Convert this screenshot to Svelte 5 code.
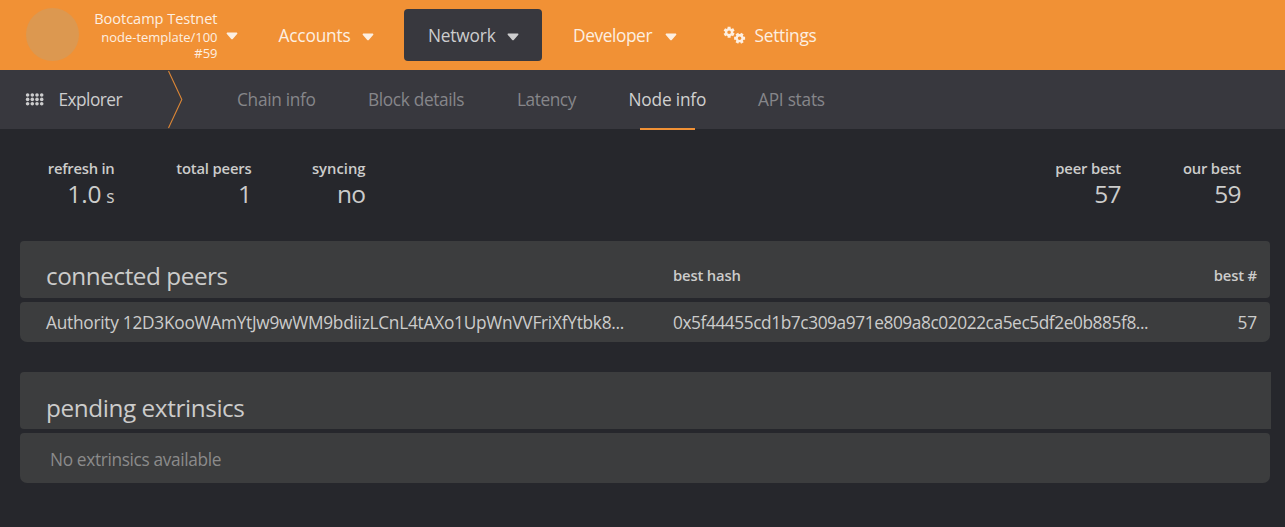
<script>
  const menus = [
    { name: 'Accounts', cls: 'accounts' },
    { name: 'Network', cls: 'network active' },
    { name: 'Developer', cls: 'developer' }
  ];
  const tabs = [
    { name: 'Chain info', cls: 'chain' },
    { name: 'Block details', cls: 'block' },
    { name: 'Latency', cls: 'latency' },
    { name: 'Node info', cls: 'node active' },
    { name: 'API stats', cls: 'api' }
  ];
  const left = [
    { label: 'refresh in', value: '1.0', unit: ' s', cls: 'refresh' },
    { label: 'total peers', value: '1', cls: 'peers' },
    { label: 'syncing', value: 'no', cls: 'syncing' }
  ];
  const right = [
    { label: 'peer best', value: '57', cls: 'peerbest' },
    { label: 'our best', value: '59', cls: 'ourbest' }
  ];
  const dots = [0, 1, 2].flatMap((r) => [0, 1, 2, 3].map((c) => ({ x: 2.6 + c * 4.7, y: 2 + r * 4.4 })));

  // outline of a six-toothed gear around (cx, cy)
  function gear(cx, cy, turn) {
    const pts = [];
    for (let i = 0; i < 6; i++) {
      const a = turn + (i * Math.PI) / 3;
      for (const [d, r] of [[-0.36, 4.2], [-0.27, 5.7], [0.27, 5.7], [0.36, 4.2]]) {
        pts.push(`${(cx + r * Math.cos(a + d)).toFixed(2)} ${(cy + r * Math.sin(a + d)).toFixed(2)}`);
      }
    }
    return `M${pts.join('L')}ZM${cx - 1.8} ${cy}a1.8 1.8 0 1 0 3.6 0a1.8 1.8 0 1 0 -3.6 0Z`;
  }
</script>

{#snippet caret()}
  <svg class="caret" width="12" height="8" viewBox="0 0 12 8"><path d="M1.2 0.5H10.8Q12 1 11.1 2L7 6.7Q6 7.7 5 6.7L0.9 2Q0 1 1.2 0.5Z" /></svg>
{/snippet}

{#snippet stat(s)}
  <div class="stat {s.cls}">
    <h5>{s.label}</h5>
    <div class="value">{s.value}{#if s.unit}<small>{s.unit}</small>{/if}</div>
  </div>
{/snippet}

<div class="page">
  <header>
    <div class="chaininfo">
      <div class="logo"></div>
      <div class="names">
        <div class="title">Bootcamp Testnet</div>
        <div>node-template/100</div>
        <div>#59</div>
      </div>
      {@render caret()}
    </div>
    <nav>
      {#each menus as m}
        <div class="menu {m.cls}"><span>{m.name}</span>{@render caret()}</div>
      {/each}
      <div class="menu settings">
        <svg width="24" height="20" viewBox="0 0 24 20"><path fill-rule="evenodd" d={gear(6.1, 6.2, 0.52)} /><path fill-rule="evenodd" d={gear(16.6, 12.2, 0)} /></svg>
        <span>Settings</span>
      </div>
    </nav>
  </header>

  <div class="tabs">
    <div class="section">
      <svg class="grid" width="19" height="13" viewBox="0 0 19 13">
        {#each dots as d}<circle cx={d.x} cy={d.y} r="1.8" />{/each}
      </svg>
      <span>Explorer</span>
    </div>
    <svg class="chevron" width="17" height="59" viewBox="0 0 17 59"><path d="M1.5 1L14.8 29.5L1.5 58" /></svg>
    {#each tabs as t}
      <div class="tab {t.cls}"><span>{t.name}</span></div>
    {/each}
  </div>

  <main>
    <section class="summary">
      <div class="group">{#each left as s}{@render stat(s)}{/each}</div>
      <div class="group">{#each right as s}{@render stat(s)}{/each}</div>
    </section>

    <section class="table">
      <div class="head">
        <h1>connected peers</h1>
        <h5>best hash</h5>
        <h5 class="end">best #</h5>
      </div>
      <div class="row">
        <div class="peer">Authority 12D3KooWAmYtJw9wWM9bdiizLCnL4tAXo1UpWnVVFriXfYtbk8...</div>
        <div class="hash">0x5f44455cd1b7c309a971e809a8c02022ca5ec5df2e0b885f8...</div>
        <div class="end">57</div>
      </div>
    </section>

    <section class="table pending">
      <div class="head"><h1>pending extrinsics</h1></div>
      <div class="row empty">No extrinsics available</div>
    </section>
  </main>
</div>

<style>
  :global(body) { margin: 0; background: #26272c; }
  .page {
    box-sizing: border-box;
    width: 100%;
    height: 527px;
    overflow: hidden;
    background: #26272c;
    color: #cccccb;
    font: 17.3px/24px "Open Sans", "Noto Sans", sans-serif;
    letter-spacing: -0.18px;
    white-space: nowrap;
  }
  h1, h5 { margin: 0; }
  svg { display: block; flex: none; fill: currentColor; }

  header { display: flex; height: 70px; background: #f19135; color: #fdefe1; }
  .chaininfo { display: flex; width: 254.5px; box-sizing: border-box; padding-left: 26px; }
  .logo { width: 53px; height: 53px; margin-top: 8px; border-radius: 50%; background: #dc9850; flex: none; }
  .names { width: 138.5px; padding-top: 9px; text-align: right; font-size: 13px; line-height: 16px; letter-spacing: -0.03px; }
  .title { font-size: 14.6px; line-height: 19px; margin-bottom: 1px; letter-spacing: -0.06px; }
  .chaininfo .caret { margin: 32px 0 0 8px; }
  nav { display: flex; align-items: center; }
  .menu { display: flex; align-items: center; box-sizing: border-box; height: 52px; padding: 2px 0 0 24px; border-radius: 4px; }
  .menu span { flex: 1; }
  .menu .caret { margin: 2px 23.5px 0 0; }
  .accounts { width: 142.5px; }
  .network { width: 138px; margin: 0 7px; }
  .developer { width: 158px; letter-spacing: -0.4px; }
  .developer .caret { margin-right: 30.5px; }
  .menu.active { background: #38383e; color: #cdcdce; }
  .settings { gap: 7.5px; padding-left: 16px; letter-spacing: -0.25px; }

  .tabs { display: flex; height: 59px; background: #38383e; color: #86868a; }
  .section { display: flex; align-items: center; width: 142px; padding: 1px 0 0 25px; gap: 14.5px; color: #cdcdce; letter-spacing: -0.55px; }
  .section .grid { margin-top: -2px; }
  .chevron { fill: none; stroke: #dc8636; stroke-width: 1.1; }
  .tab { display: flex; flex-direction: column; justify-content: center; box-sizing: border-box; padding-top: 1px; position: relative; }
  .chain { margin-left: 53px; width: 131px; letter-spacing: -0.3px; }
  .block { width: 149px; letter-spacing: -0.35px; }
  .latency { width: 111.5px; letter-spacing: -0.45px; }
  .node { width: 129.5px; }
  .api { letter-spacing: -0.25px; }
  .tab.active { color: #d0d0d0; }
  .tab.active::after { content: ''; position: absolute; left: 11.5px; top: 58px; width: 55px; height: 2px; background: #f19135; }

  main { padding: 0 15px 0 20px; }
  .summary { display: flex; justify-content: space-between; height: 84px; padding: 28px 29px 0 0; }
  .group { display: flex; }
  .stat { text-align: right; }
  .refresh { width: 94.5px; }
  .peers { width: 137px; }
  .syncing { width: 114px; }
  .ourbest { width: 120px; }
  h5 { font-size: 14.8px; line-height: 22px; font-weight: 600; letter-spacing: -0.17px; }
  .refresh h5 { letter-spacing: -0.25px; }
  .syncing h5 { letter-spacing: 0; }
  .value { font-size: 24.5px; line-height: 30px; letter-spacing: -0.6px; }
  .refresh .value { letter-spacing: 0; }
  .value small { font-size: 17.5px; }

  .head { display: grid; grid-template-columns: 627px 1fr 100px; box-sizing: border-box; height: 57px; padding: 12px 13px 0 26px; border-radius: 4px; background: #3c3d3e; }
  .head h1 { font-size: 24.3px; font-weight: 400; line-height: 46px; letter-spacing: -0.45px; }
  .head h5 { line-height: 45px; }
  .row { display: grid; grid-template-columns: 627px 1fr 100px; box-sizing: border-box; height: 40px; margin-top: 4px; padding: 0 13px 0 26px; line-height: 42px; border-radius: 4px 4px 7px 7px; background: #3c3d3e; }
  .end { text-align: right; }
  .peer { letter-spacing: -0.26px; }
  .hash { letter-spacing: -0.42px; }
  .pending { margin-top: 30px; }
  .pending .head { margin-right: -1px; border-radius: 4px 0 0 4px; }
  .pending .head h1 { line-height: 48px; letter-spacing: -0.4px; }
  .empty { display: block; height: 50px; line-height: 54px; padding-left: 30px; color: #8b8b8b; letter-spacing: -0.35px; }
</style>
